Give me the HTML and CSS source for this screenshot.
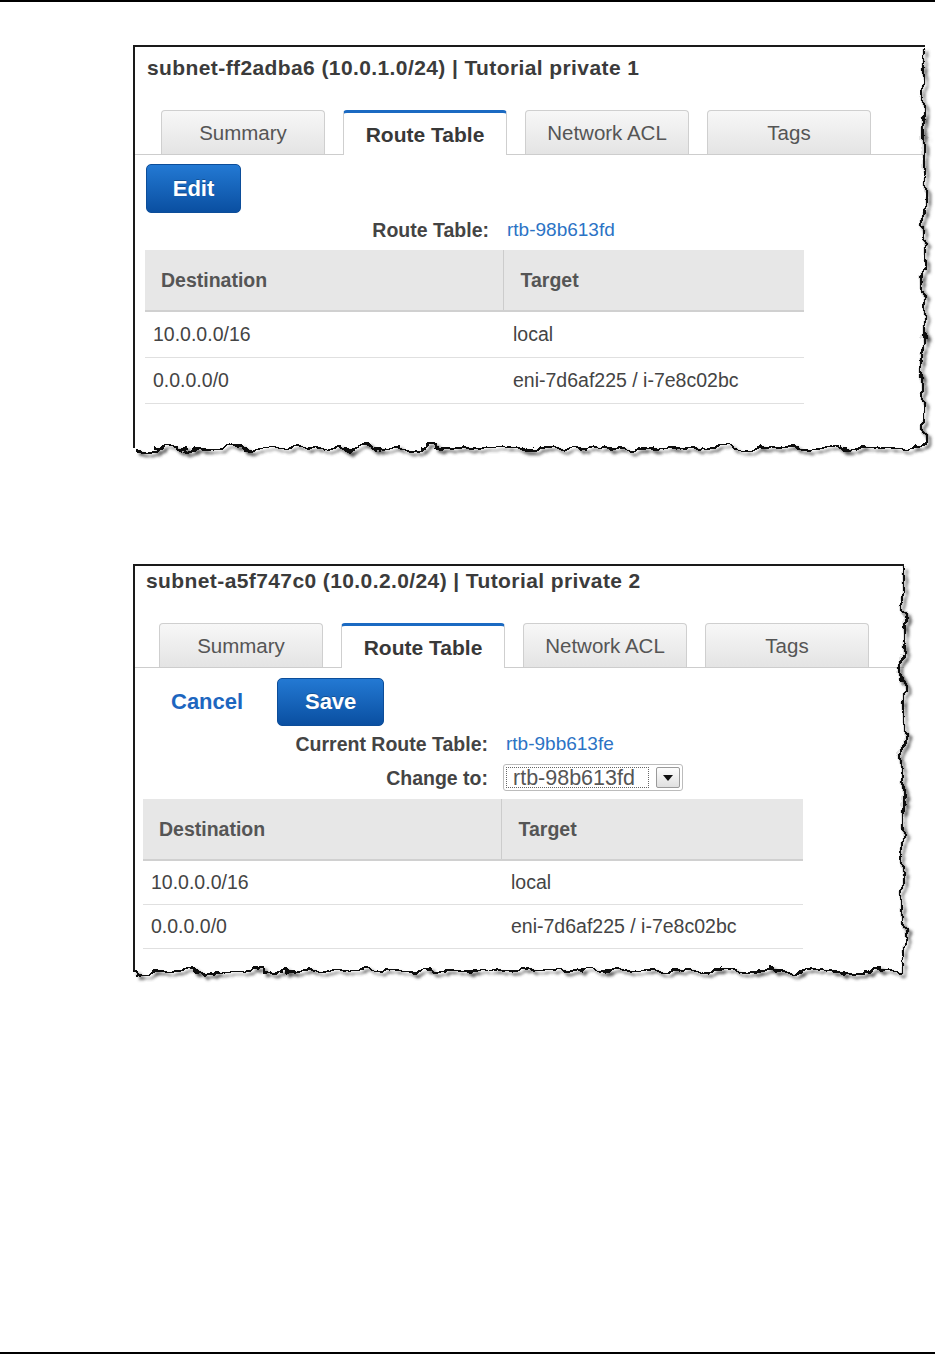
FILE: index.html
```html
<!DOCTYPE html>
<html lang="en">
<head>
    <meta charset="UTF-8">
    <meta name="viewport" content="width=device-width, initial-scale=1.0">
    <title>Subnet Route Table</title>
    <link rel="stylesheet" href="styles.css">
</head>
<body>
<div class="page">
    <div class="rule"></div>

    <!-- Subnet 1: view mode -->
    <section class="panel panel-view">
        <h2 class="panel-title">subnet-ff2adba6 (10.0.1.0/24) | Tutorial private 1</h2>
        <ul class="tabs">
            <li class="tab">Summary</li>
            <li class="tab active">Route Table</li>
            <li class="tab">Network ACL</li>
            <li class="tab">Tags</li>
        </ul>
        <div class="actions">
            <button class="btn btn-edit">Edit</button>
        </div>
        <div class="meta">
            <span class="meta-label">Route Table:</span>
            <a class="meta-link" href="#">rtb-98b613fd</a>
        </div>
        <table class="routes">
            <colgroup><col class="col-dest"><col></colgroup>
            <thead>
                <tr><th>Destination</th><th>Target</th></tr>
            </thead>
            <tbody>
                <tr><td>10.0.0.0/16</td><td>local</td></tr>
                <tr><td>0.0.0.0/0</td><td>eni-7d6af225 / i-7e8c02bc</td></tr>
            </tbody>
        </table>

        <svg class="torn" aria-hidden="true">
            <defs>
                <filter id="torn1" x="-3%" y="-3%" width="106%" height="112%">
                    <feTurbulence type="fractalNoise" baseFrequency="0.045" numOctaves="4" seed="4" result="noise"/>
                    <feDisplacementMap in="SourceGraphic" in2="noise" scale="17" xChannelSelector="R" yChannelSelector="G" result="rough"/>
                    <feGaussianBlur in="rough" stdDeviation="1.8" result="blur"/>
                    <feOffset in="blur" dx="3" dy="3" result="off"/>
                    <feFlood flood-color="#444" flood-opacity="0.9"/>
                    <feComposite in2="off" operator="in" result="shadow"/>
                    <feMerge><feMergeNode in="shadow"/><feMergeNode in="rough"/></feMerge>
                </filter>
            </defs>
            <g filter="url(#torn1)" stroke="#111" stroke-width="2.2">
                <line x1="100%" y1="0" x2="100%" y2="100%"/>
                <line x1="0" y1="100%" x2="100%" y2="100%"/>
            </g>
        </svg>
    </section>

    <!-- Subnet 2: edit mode -->
    <section class="panel panel-edit">
        <h2 class="panel-title">subnet-a5f747c0 (10.0.2.0/24) | Tutorial private 2</h2>
        <ul class="tabs">
            <li class="tab">Summary</li>
            <li class="tab active">Route Table</li>
            <li class="tab">Network ACL</li>
            <li class="tab">Tags</li>
        </ul>
        <div class="actions">
            <a class="cancel" href="#">Cancel</a>
            <button class="btn btn-save">Save</button>
        </div>
        <div class="meta">
            <span class="meta-label">Current Route Table:</span>
            <a class="meta-link" href="#">rtb-9bb613fe</a>
            <span class="meta-label">Change to:</span>
            <span class="select">
                <span class="select-value">rtb-98b613fd</span>
                <span class="select-arrow"></span>
            </span>
        </div>
        <table class="routes">
            <colgroup><col class="col-dest"><col></colgroup>
            <thead>
                <tr><th>Destination</th><th>Target</th></tr>
            </thead>
            <tbody>
                <tr><td>10.0.0.0/16</td><td>local</td></tr>
                <tr><td>0.0.0.0/0</td><td>eni-7d6af225 / i-7e8c02bc</td></tr>
            </tbody>
        </table>

        <svg class="torn" aria-hidden="true">
            <defs>
                <filter id="torn2" x="-3%" y="-3%" width="106%" height="112%">
                    <feTurbulence type="fractalNoise" baseFrequency="0.045" numOctaves="4" seed="11" result="noise"/>
                    <feDisplacementMap in="SourceGraphic" in2="noise" scale="17" xChannelSelector="R" yChannelSelector="G" result="rough"/>
                    <feGaussianBlur in="rough" stdDeviation="1.8" result="blur"/>
                    <feOffset in="blur" dx="3" dy="3" result="off"/>
                    <feFlood flood-color="#444" flood-opacity="0.9"/>
                    <feComposite in2="off" operator="in" result="shadow"/>
                    <feMerge><feMergeNode in="shadow"/><feMergeNode in="rough"/></feMerge>
                </filter>
            </defs>
            <g filter="url(#torn2)" stroke="#111" stroke-width="2.2">
                <line x1="100%" y1="0" x2="100%" y2="100%"/>
                <line x1="0" y1="100%" x2="100%" y2="100%"/>
            </g>
        </svg>
    </section>

    <div class="rule rule-bottom"></div>
</div>
</body>
</html>
```

FILE: styles.css
```css
body {
    margin: 0;
    font-family: "Liberation Sans", Arial, sans-serif;
    color: #444;
    background: #fff;
}
.page {
    width: 935px;
    height: 1354px;
    display: flex;
    flex-direction: column;
}
.rule {
    border-top: 2px solid #000;
}
.rule-bottom {
    margin-top: auto;
}

/* panels */
.panel {
    position: relative;
    margin: 43px 0 0 133px;
    border-top: 2px solid #1a1a1a;
    border-left: 2px solid #1a1a1a;
    background: #fff;
}
.panel-view {
    width: 790px;
    padding-bottom: 44px;
}
.panel-edit {
    width: 769px;
    margin-top: 116px;
    padding-bottom: 22px;
}
.panel-title {
    margin: 0;
    padding: 9px 0 0 12px;
    font-size: 21px;
    line-height: 24px;
    letter-spacing: 0.4px;
    font-weight: bold;
    color: #3b3b3b;
}
.panel-edit .panel-title {
    padding-top: 3px;
    padding-left: 11px;
}
.torn {
    position: absolute;
    top: 0;
    left: 0;
    width: 100%;
    height: 100%;
    overflow: visible;
    pointer-events: none;
}

/* tabs */
.tabs {
    display: flex;
    gap: 18px;
    list-style: none;
    margin: 30px 0 0;
    padding: 0 0 0 26px;
    border-bottom: 1px solid #cdcdcd;
}
.panel-edit .tabs {
    padding-left: 24px;
}
.tab {
    width: 164px;
    height: 44px;
    box-sizing: border-box;
    display: flex;
    align-items: center;
    justify-content: center;
    border: 1px solid #cfcfcf;
    border-bottom: none;
    border-radius: 4px 4px 0 0;
    background: linear-gradient(#f7f7f7, #e4e4e4);
    font-size: 20.5px;
    color: #555;
}
.tab.active {
    background: #fff;
    border-top: 3px solid #1b6ac2;
    margin-bottom: -1px;
    height: 45px;
    font-weight: bold;
    font-size: 21px;
    color: #383838;
    padding-top: 2px;
}

/* buttons */
.actions {
    display: flex;
    align-items: center;
    margin: 9px 0 0 11px;
}
.panel-edit .actions {
    margin: 10px 0 0 36px;
    gap: 34px;
}
.btn {
    width: 95px;
    height: 49px;
    border: 1px solid #0c4d99;
    border-radius: 5px;
    background: linear-gradient(#2379d3, #0a4fa1);
    color: #fff;
    font-family: inherit;
    font-size: 22px;
    font-weight: bold;
    text-shadow: 0 -1px 0 rgba(0, 0, 0, 0.25);
    padding: 0;
}
.btn-save {
    width: 107px;
    height: 48px;
}
.cancel {
    font-size: 22px;
    font-weight: bold;
    color: #1d66bf;
    text-decoration: none;
}

/* label / value rows */
.meta {
    display: grid;
    grid-template-columns: 354px max-content;
    column-gap: 18px;
    row-gap: 8px;
    align-items: center;
    margin-top: 5px;
    font-size: 19.5px;
    line-height: 24px;
}
.panel-edit .meta {
    margin-top: 6px;
    grid-template-columns: 353px max-content;
}
.meta-label {
    text-align: right;
    font-weight: bold;
    color: #444;
}
.meta-link {
    color: #2b73c5;
    text-decoration: none;
    font-size: 19px;
}
.select {
    display: flex;
    align-items: center;
    width: 180px;
    height: 27px;
    box-sizing: border-box;
    margin-left: -3px;
    padding: 2px;
    border: 1px solid #bcbcbc;
    border-radius: 3px;
    background: #fff;
}
.select-value {
    flex: 1;
    height: 100%;
    box-sizing: border-box;
    border: 1px dotted #666;
    padding-left: 6px;
    font-size: 21.5px;
    line-height: 20px;
    color: #555;
}
.select-arrow {
    width: 24px;
    height: 100%;
    box-sizing: border-box;
    margin-left: 7px;
    border: 1px solid #9a9a9a;
    border-radius: 2px;
    background: linear-gradient(#fdfdfd, #e0e0e0);
    display: flex;
    align-items: center;
    justify-content: center;
}
.select-arrow::after {
    content: "";
    border-left: 5px solid transparent;
    border-right: 5px solid transparent;
    border-top: 6px solid #111;
}

/* route table */
.routes {
    width: 659px;
    margin: 8px 0 0 10px;
    border-collapse: collapse;
    table-layout: fixed;
    font-size: 19.5px;
    color: #444;
}
.panel-edit .routes {
    margin-left: 8px;
    width: 660px;
}
.col-dest {
    width: 358px;
}
.routes th {
    height: 60px;
    padding: 0 0 0 16px;
    background: #e7e7e7;
    border-bottom: 2px solid #d0d0d0;
    text-align: left;
    font-weight: bold;
    color: #555;
}
.routes th + th {
    border-left: 1px solid #cccccc;
    padding-left: 17px;
}
.routes td {
    height: 45px;
    padding: 0 0 0 8px;
    border-bottom: 1px solid #e0e0e0;
}
.routes td + td {
    padding-left: 10px;
}
.panel-edit .routes td {
    height: 43px;
}
```
